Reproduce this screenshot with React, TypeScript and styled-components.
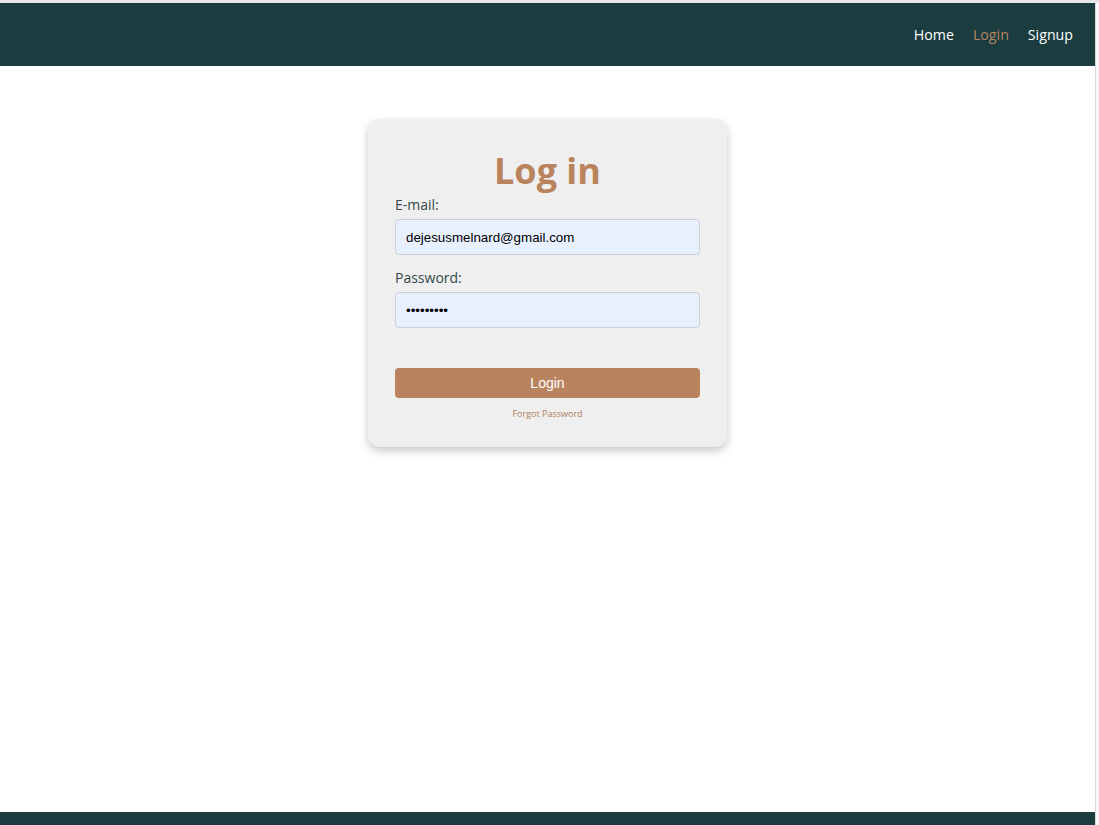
import React from "react";
import styled, { createGlobalStyle } from "styled-components";

const GlobalStyle = createGlobalStyle`
  html, body {
    margin: 0;
    padding: 0;
    background: #ffffff;
    overflow: hidden;
  }
  body {
    font-family: "Open Sans", "Liberation Sans", sans-serif;
  }
  * { box-sizing: border-box; }
`;

const Frame = styled.div`
  display: flex;
  flex-direction: column;
  height: 825px;
  width: 1099px;
`;

const TopStrip = styled.div`
  height: 3px;
  background: #e6e6e6;
  flex: none;
`;

const Row = styled.div`
  flex: 1;
  display: flex;
  min-height: 0;
`;

const Page = styled.div`
  flex: 1;
  display: flex;
  flex-direction: column;
  min-width: 0;
`;

const Edge = styled.div`
  width: 4px;
  flex: none;
  background: #fbf7f7;
  border-left: 1px solid #d9d6d6;
`;

const NavBar = styled.nav`
  height: 63px;
  flex: none;
  background: #1b3d40;
  display: flex;
  align-items: center;
  justify-content: flex-end;
  gap: 19px;
  padding-right: 22px;
`;

const NavLink = styled.a<{ $active?: boolean }>`
  font-family: "Open Sans", sans-serif;
  font-size: 14.2px;
  color: ${(p) => (p.$active ? "#b98560" : "#ffffff")};
  text-decoration: none;
  cursor: pointer;
  line-height: 18px;
`;

const Main = styled.main`
  flex: 1;
  display: flex;
  justify-content: center;
  align-items: flex-start;
  padding-top: 53px;
`;

const Card = styled.form`
  width: 359px;
  background: #efefef;
  border-radius: 12px;
  box-shadow: 0 4px 10px rgba(0, 0, 0, 0.22);
  padding: 27px 27px 27px;
  display: flex;
  flex-direction: column;
`;

const Title = styled.h1`
  margin: 0;
  text-align: center;
  font-family: "Open Sans", sans-serif;
  font-weight: 700;
  font-size: 36px;
  line-height: 49px;
  color: #b9835e;
`;

const Label = styled.label<{ $gap?: number }>`
  font-family: "Open Sans", sans-serif;
  font-size: 14px;
  line-height: 19px;
  color: #35484a;
  margin-top: ${(p) => p.$gap ?? 0}px;
  margin-bottom: 5px;
`;

const Input = styled.input`
  height: 36px;
  width: 100%;
  border: 1px solid #cdd1d6;
  border-radius: 4px;
  background: #e8f0fe;
  padding: 0 10px;
  font-family: "Liberation Sans", Arial, sans-serif;
  font-size: 13.333px;
  color: #000000;
  outline: none;
`;

const Button = styled.button`
  margin-top: 40px;
  height: 30px;
  width: 100%;
  border: none;
  border-radius: 4px;
  background: #b9835e;
  color: #ffffff;
  font-family: "Liberation Sans", Arial, sans-serif;
  font-size: 14px;
  cursor: pointer;
`;

const Forgot = styled.a`
  margin-top: 9px;
  text-align: center;
  font-family: "Open Sans", sans-serif;
  font-size: 9px;
  line-height: 13px;
  color: #b07f60;
  text-decoration: none;
`;

const Footer = styled.footer`
  height: 13px;
  flex: none;
  background: #1b3d40;
`;

export default function App() {
  return (
    <>
      <GlobalStyle />
      <Frame>
        <TopStrip />
        <Row>
          <Page>
            <NavBar>
              <NavLink>Home</NavLink>
              <NavLink $active>Login</NavLink>
              <NavLink>Signup</NavLink>
            </NavBar>
            <Main>
              <Card onSubmit={(e) => e.preventDefault()}>
                <Title>Log in</Title>
                <Label>E-mail:</Label>
                <Input type="email" defaultValue="dejesusmelnard@gmail.com" />
                <Label $gap={13}>Password:</Label>
                <Input type="password" defaultValue="123456789" />
                <Button type="submit">Login</Button>
                <Forgot>Forgot Password</Forgot>
              </Card>
            </Main>
            <Footer />
          </Page>
          <Edge />
        </Row>
      </Frame>
    </>
  );
}
